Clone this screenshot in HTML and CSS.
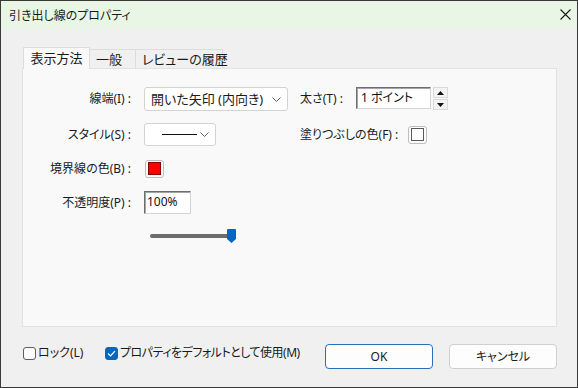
FILE: index.html
```html
<!DOCTYPE html>
<html lang="ja">
<head>
<meta charset="utf-8">
<title>引き出し線のプロパティ</title>
<link rel="stylesheet" href="styles.css">
</head>
<body>
<div class="window">
  <div class="titlebar">
    <span class="title">引き出し線のプロパティ</span>
    <svg class="close" width="11" height="11" viewBox="0 0 11 11"><path d="M0.5 0.5 L10.5 10.5 M10.5 0.5 L0.5 10.5" stroke="#1a1a1a" stroke-width="1.1" fill="none"/></svg>
  </div>
  <div class="body">
    <div class="tabs">
      <div class="tab active">表示方法</div>
      <div class="tab t2">一般</div>
      <div class="tab t3">レビューの履歴</div>
    </div>
    <div class="panel">
      <div class="row r1">
        <span class="lbl">線端(I) :</span>
        <div class="cell">
          <div class="combo combo-wide">
            <span class="combo-text">開いた矢印 (内向き)</span>
            <svg class="chev" width="9" height="5" viewBox="0 0 9 5"><path d="M0.5 0.5 L4.5 4.5 L8.5 0.5" stroke="#5f5f5f" fill="none"/></svg>
          </div>
        </div>
        <div class="right">
          <span class="rlbl w56">太さ(T) :</span>
          <div class="sunken spin-input">1 ポイント</div>
          <div class="spin">
            <div class="spin-btn"><svg width="7" height="4" viewBox="0 0 7 4"><path d="M3.5 0 L7 4 L0 4 Z" fill="#111"/></svg></div>
            <div class="spin-btn"><svg width="7" height="4" viewBox="0 0 7 4"><path d="M0 0 L7 0 L3.5 4 Z" fill="#111"/></svg></div>
          </div>
        </div>
      </div>
      <div class="row r2">
        <span class="lbl">スタイル(S) :</span>
        <div class="cell">
          <div class="combo combo-small">
            <span class="line-sample"></span>
            <svg class="chev" width="9" height="5" viewBox="0 0 9 5"><path d="M0.5 0.5 L4.5 4.5 L8.5 0.5" stroke="#5f5f5f" fill="none"/></svg>
          </div>
        </div>
        <div class="right">
          <span class="rlbl w108">塗りつぶしの色(F) :</span>
          <div class="swatch"><span class="swatch-inner empty"></span></div>
        </div>
      </div>
      <div class="row r3">
        <span class="lbl">境界線の色(B) :</span>
        <div class="swatch red-btn"><span class="swatch-inner red"></span></div>
      </div>
      <div class="row r4">
        <span class="lbl">不透明度(P) :</span>
        <div class="sunken pct-input">100%</div>
      </div>
      <div class="row r5">
        <div class="slider">
          <div class="track"></div>
          <svg class="thumb" width="9" height="14" viewBox="0 0 9 14"><path d="M1 0 H8 Q9 0 9 1 V10 L4.5 14 L0 10 V1 Q0 0 1 0 Z" fill="#0067c0"/></svg>
        </div>
      </div>
    </div>
    <div class="footer">
      <label class="check c1"><span class="box"></span><span>ロック(L)</span></label>
      <label class="check c2"><span class="box checked"><svg width="9" height="7" viewBox="0 0 9 7"><path d="M1 3.5 L3.5 6 L8 1" stroke="#fff" stroke-width="1.2" fill="none"/></svg></span><span class="tight">プロパティをデフォルトとして使用(M)</span></label>
      <div class="buttons">
        <div class="btn default">OK</div>
        <div class="btn">キャンセル</div>
      </div>
    </div>
  </div>
</div>
</body>
</html>
```
FILE: styles.css
```css
html, body {
  margin: 0;
  padding: 0;
}
body {
  font-family: "Noto Sans", "Noto Sans CJK JP", sans-serif;
  font-size: 12px;
  font-feature-settings: "palt";
  color: #1a1a1a;
  background: #f0f0f0;
}
.window {
  width: 578px;
  height: 388px;
  box-sizing: border-box;
  border: 1px solid #3a3a3a;
  background: #f0f0f0;
  display: flex;
  flex-direction: column;
}
.titlebar {
  height: 28px;
  background: #e9f6e5;
  display: flex;
  align-items: center;
  justify-content: space-between;
  padding: 0 6px 0 8px;
}
.title {
  font-size: 12px;
  line-height: 16px;
  margin-top: 1px;
}
.close {
  margin-top: -2px;
}
.body {
  padding: 18px 20px 0 21px;
}
.tabs {
  display: flex;
  align-items: flex-end;
  height: 21px;
}
.tab {
  box-sizing: border-box;
  border: 1px solid #dddddd;
  border-bottom: none;
  font-size: 13px;
  line-height: 18px;
  white-space: nowrap;
}
.tab.active {
  position: relative;
  z-index: 1;
  width: 67px;
  height: 22px;
  margin-bottom: -1px;
  margin-left: 1px;
  background: #f9f9f9;
  text-align: center;
  padding-top: 1px;
}
.tab.t2,
.tab.t3 {
  height: 19px;
  background: #f0f0f0;
  border-left: none;
  padding: 0 0 0 6px;
  color: #1a1a1a;
}
.tab.t2 { width: 46px; }
.tab.t3 { width: 87px; }
.panel {
  box-sizing: border-box;
  width: 535px;
  height: 259px;
  background: #f9f9f9;
  border: 1px solid #e2e2e2;
  padding-top: 18px;
  display: flex;
  flex-direction: column;
}
.row {
  display: flex;
  align-items: center;
}
.r1 { height: 24px; }
.r2 { height: 23px; margin-top: 12px; }
.r3 { height: 19px; margin-top: 13px; }
.r4 { height: 23px; margin-top: 13px; }
.r5 { height: 14px; margin-top: 15px; }
.lbl {
  width: 108px;
  margin-right: 13px;
  text-align: right;
  white-space: nowrap;
  line-height: 16px;
}
.cell {
  width: 144px;
  height: 100%;
  display: flex;
}
.combo {
  box-sizing: border-box;
  background: #ffffff;
  border: 1px solid #d3d3d3;
  border-radius: 3px;
  display: flex;
  align-items: center;
  height: 100%;
}
.combo-wide {
  width: 144px;
  padding: 0 6px 0 6px;
  justify-content: space-between;
}
.combo-text {
  font-size: 13px;
  line-height: 16px;
  white-space: nowrap;
}
.combo-small {
  width: 72px;
  padding: 0 6px 0 17px;
  justify-content: space-between;
}
.line-sample {
  width: 35px;
  height: 1px;
  background: #111;
}
.chev {
  flex: none;
}
.right {
  display: flex;
  align-items: center;
  margin-left: 12px;
  height: 100%;
}
.rlbl {
  white-space: nowrap;
  line-height: 16px;
}
.w56 { width: 56px; }
.w108 { width: 108px; }
.sunken {
  box-sizing: border-box;
  background: #ffffff;
  border: 1px solid;
  border-color: #6e6e6e #d4d4d4 #d4d4d4 #6e6e6e;
  box-shadow: inset 1px 1px 0 #a5a5a5;
  line-height: 16px;
  padding-left: 4px;
  white-space: nowrap;
  color: #111;
}
.spin-input {
  width: 75px;
  height: 22px;
  padding-top: 2px;
  align-self: flex-start;
}
.spin {
  display: flex;
  flex-direction: column;
  gap: 1px;
  margin-left: 2px;
  align-self: flex-start;
}
.spin-btn {
  box-sizing: border-box;
  width: 15px;
  height: 11px;
  background: #f3f3f3;
  border: 1px solid #dadada;
  display: flex;
  align-items: center;
  justify-content: center;
}
.swatch {
  box-sizing: border-box;
  width: 19px;
  height: 18px;
  border: 1px solid #bdbdbd;
  border-radius: 3px;
  background: #fdfdfd;
  display: flex;
  align-items: center;
  justify-content: center;
}
.swatch-inner {
  box-sizing: border-box;
  width: 13px;
  height: 13px;
}
.swatch-inner.empty {
  border: 1px solid #5a5a5a;
  background: #ffffff;
}
.swatch-inner.red {
  background: #ff0000;
  border: 1px solid #8a0000;
}
.red-btn {
  margin-left: 1px;
}
.pct-input {
  width: 47px;
  height: 23px;
  padding-left: 2px;
  padding-top: 2px;
}
.slider {
  margin-left: 127px;
  width: 88px;
  height: 14px;
  display: flex;
  align-items: center;
}
.track {
  width: 80px;
  height: 4px;
  background: #6b6b6b;
  border-radius: 2px;
}
.thumb {
  margin-left: -3px;
}
.footer {
  display: flex;
  align-items: flex-start;
  margin-top: 17px;
  height: 25px;
  width: 535px;
}
.check {
  display: flex;
  align-items: center;
  gap: 2px;
  margin-top: 1px;
  white-space: nowrap;
  line-height: 16px;
}
.c1 {
  width: 82px;
  margin-left: 1px;
}
.tight {
  letter-spacing: -0.5px;
}
.box {
  box-sizing: border-box;
  width: 13px;
  height: 13px;
  border: 1px solid #5d5d5d;
  border-radius: 3px;
  background: #fbfbfb;
  display: flex;
  align-items: center;
  justify-content: center;
}
.box.checked {
  background: #0067c0;
  border-color: #0067c0;
}
.buttons {
  margin-left: auto;
  display: flex;
  gap: 16px;
}
.btn {
  box-sizing: border-box;
  width: 108px;
  height: 25px;
  border: 1px solid #d0d0d0;
  border-radius: 4px;
  background: #fdfdfd;
  display: flex;
  align-items: center;
  justify-content: center;
  line-height: 16px;
}
.btn.default {
  border-color: #2a6ebd;
}
```
